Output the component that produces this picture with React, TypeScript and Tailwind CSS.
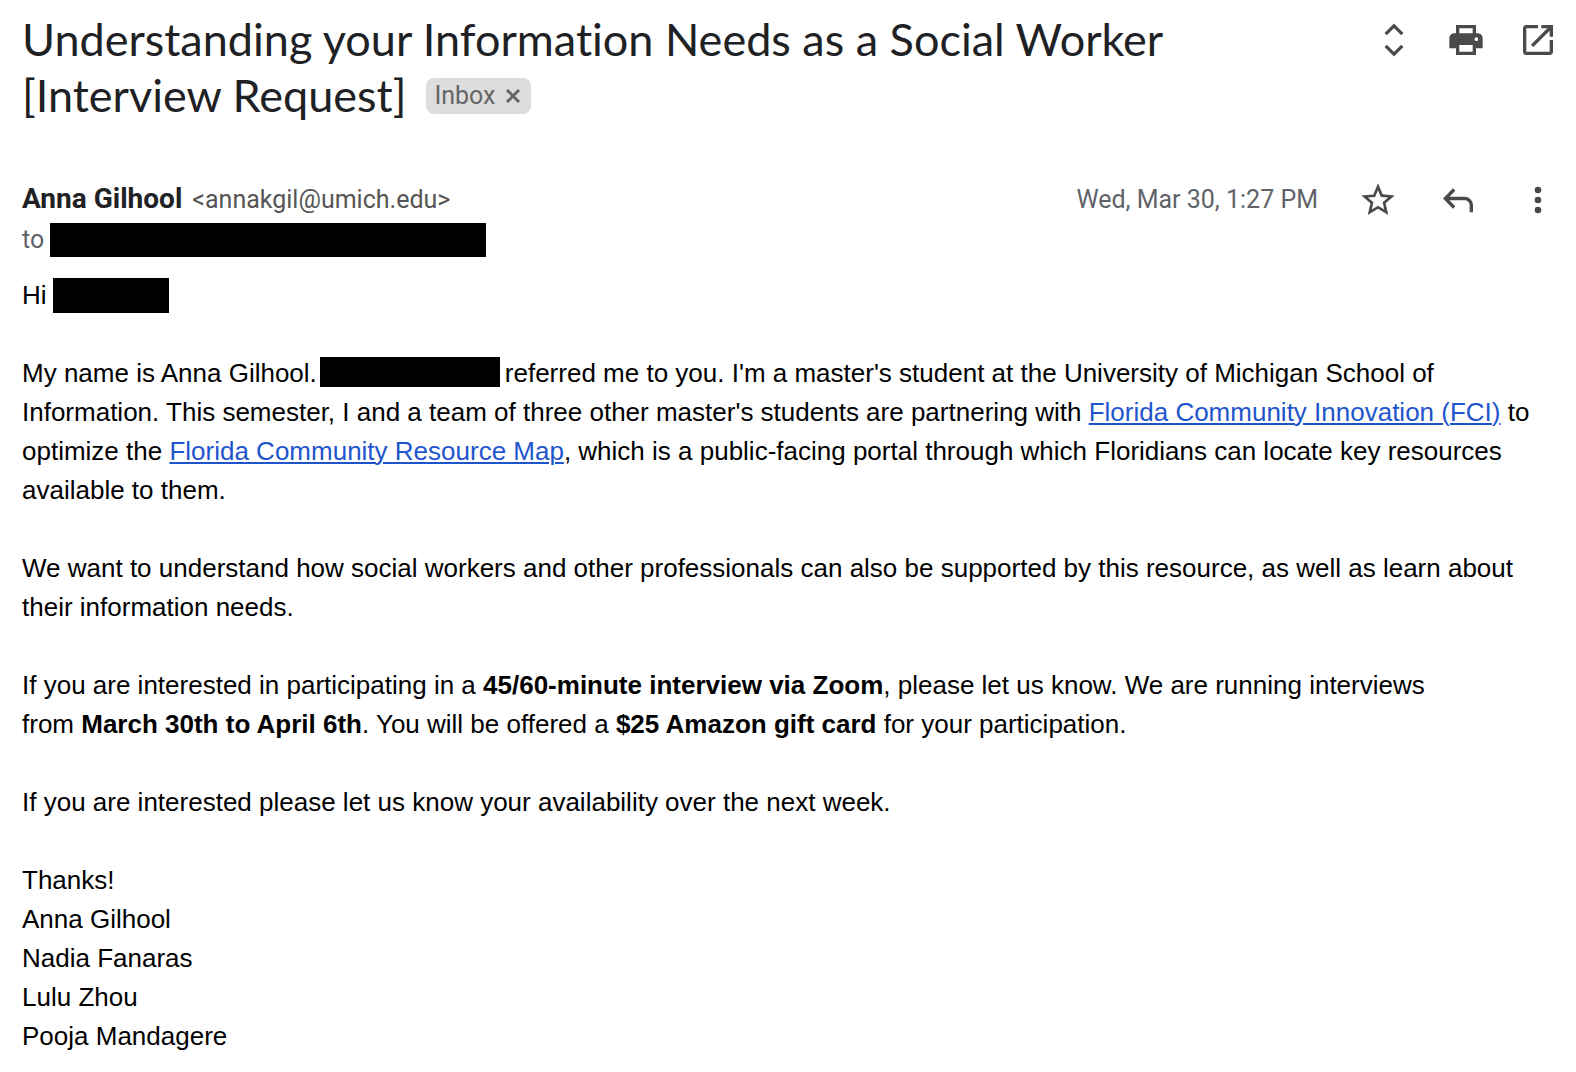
import type { ReactNode } from 'react'

interface IconButtonProps {
  label: string
  children: ReactNode
}

const SIGNATURE = ['Thanks!', 'Anna Gilhool', 'Nadia Fanaras', 'Lulu Zhou', 'Pooja Mandagere']

function IconButton({ label, children }: IconButtonProps) {
  return (
    <button type="button" aria-label={label} title={label} className="block size-10 shrink-0 text-[#4a4a4a]">
      <svg viewBox="0 0 24 24" className="size-10" fill="currentColor" aria-hidden="true">
        {children}
      </svg>
    </button>
  )
}

function BodyLink({ children }: { children: ReactNode }) {
  return (
    <a href="#" className="text-[#1f55cc] underline decoration-2 underline-offset-2">{children}</a>
  )
}

export default function App() {
  return (
    <main className="min-h-screen bg-white pl-[22px] pr-[18px] pt-[11px] pb-5 font-['Liberation_Sans',Arial,sans-serif] text-black">
      {/* Subject line and thread actions */}
      <header className="flex items-start justify-between gap-6">
        <h1 className="max-w-[1200px] font-['Lato',sans-serif] text-[45px] leading-14 text-[#202124] [font-variant-ligatures:none]">
          Understanding your Information Needs as a Social Worker [Interview Request]
          <span className="mb-[10px] ml-5 inline-flex h-9 items-center gap-2 rounded-lg bg-[#ddd] px-2 align-middle font-['Roboto',sans-serif] text-[25px] text-[#666]">
            Inbox
            <button type="button" aria-label="Remove label Inbox" className="block">
              <svg viewBox="0 0 20 20" className="size-5" fill="none" stroke="currentColor" strokeWidth="3" aria-hidden="true">
                <path d="M4 4l12 12M16 4L4 16" />
              </svg>
            </button>
          </span>
        </h1>
        <div className="flex gap-8 pt-[9px]">
          <IconButton label="Expand all">
            <path fill="none" stroke="currentColor" strokeWidth="1.9" d="M7 8.5l5-5 5 5M7 15.5l5 5 5-5" />
          </IconButton>
          <IconButton label="Print all">
            <path fillRule="evenodd" d="M18 8V3H6v5H5c-1.66 0-3 1.34-3 3v6h4v4h12v-4h4v-6c0-1.66-1.34-3-3-3h-1zM8 5h8v3H8V5zm8 14H8v-4h8v4zm2.2-6.4a1.1 1.1 0 1 1 0-2.2 1.1 1.1 0 0 1 0 2.2z" />
          </IconButton>
          <IconButton label="Open in new window">
            <path d="M19 19H5V5h7V3H5c-1.11 0-2 .9-2 2v14c0 1.1.89 2 2 2h14c1.1 0 2-.9 2-2v-7h-2v7zM14 3v2h3.59l-9.83 9.83 1.41 1.41L19 6.41V10h2V3h-7z" />
          </IconButton>
        </div>
      </header>

      {/* Sender */}
      <section className="mt-14 font-['Roboto',sans-serif] text-[25px] leading-9 text-[#5f6368]">
        <div className="flex items-center justify-between">
          <p className="flex items-baseline gap-[10px]">
            <span className="text-[28px] font-bold text-[#202124]">Anna Gilhool</span>
            <span className="text-[#555]">&lt;annakgil@umich.edu&gt;</span>
          </p>
          <div className="flex items-center gap-10">
            <time dateTime="2022-03-30T13:27">Wed, Mar 30, 1:27 PM</time>
            <IconButton label="Star">
              <path d="M22 9.24l-7.19-.62L12 2 9.19 8.63 2 9.24l5.46 4.73L5.82 21 12 17.27 18.18 21l-1.63-7.03L22 9.24zM12 15.4l-3.76 2.27 1-4.28-3.32-2.88 4.38-.38L12 6.1l1.71 4.04 4.38.38-3.32 2.88 1 4.28L12 15.4z" />
            </IconButton>
            <IconButton label="Reply">
              <path fill="none" stroke="currentColor" strokeWidth="2" d="M9.7 5.7l-5.3 5.4 5.3 5.4M4.4 11.1H16a4 4 0 0 1 4 4v4.2" />
            </IconButton>
            <IconButton label="More">
              <path d="M12 8a2 2 0 1 0 0-4 2 2 0 0 0 0 4zm0 2a2 2 0 1 0 0 4 2 2 0 0 0 0-4zm0 6a2 2 0 1 0 0 4 2 2 0 0 0 0-4z" />
            </IconButton>
          </div>
        </div>
        <div className="mt-[2px] flex items-center gap-[6px]">
          to
          <span className="h-[34px] w-[436px] bg-black" />
        </div>
      </section>

      {/* Message body */}
      <article className="mt-[18px] text-[26px] leading-[39px]">
        <div className="flex items-center gap-[6px]">
          Hi
          <span className="h-[35px] w-[116px] bg-black" />
        </div>
        <p className="mt-[39px]">
          My name is Anna Gilhool.
          <span className="mr-[5px] mb-[6px] ml-[3px] inline-block h-[30px] w-[180px] bg-black align-middle" />
          referred me to you. I'm a master's student at the University of Michigan School of Information. This semester, I and a team of three other master's students are partnering with{' '}
          <BodyLink>Florida Community Innovation (FCI)</BodyLink> to optimize the{' '}
          <BodyLink>Florida Community Resource Map</BodyLink>, which is a public-facing portal through which Floridians can locate key resources available to them.
        </p>
        <p className="mt-[39px]">
          We want to understand how social workers and other professionals can also be supported by this resource, as well as learn about their information needs.
        </p>
        <p className="mt-[39px]">
          If you are interested in participating in a <b>45/60-minute interview via Zoom</b>, please let us know. We are running interviews from&nbsp;<b>March&nbsp;30th to April 6th</b>. You will be offered a <b>$25 Amazon gift card</b> for your participation.
        </p>
        <p className="mt-[39px]">If you are interested please let us know your availability over the next week.</p>
        <div className="mt-[39px]">
          {SIGNATURE.map(line => (
            <p key={line}>{line}</p>
          ))}
        </div>
      </article>
    </main>
  )
}
